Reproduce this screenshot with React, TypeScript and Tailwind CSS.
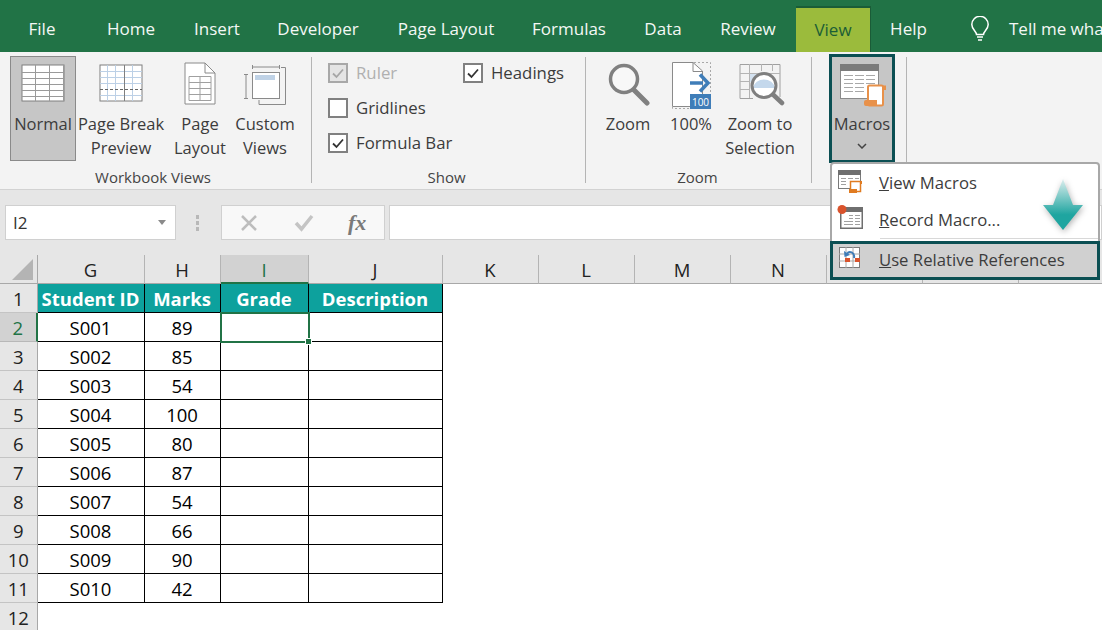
import type { ReactNode } from "react";

const font = "font-['Open_Sans','Noto_Sans',sans-serif]";

const tabs: [string, string][] = [
  ["File", "w-[84px]"],
  ["Home", "w-[94px]"],
  ["Insert", "w-[78px]"],
  ["Developer", "w-[124px]"],
  ["Page Layout", "w-[132px]"],
  ["Formulas", "w-[114px]"],
  ["Data", "w-[74px]"],
  ["Review", "w-[96px]"],
];

function Tabs() {
  return (
    <div className="flex h-[52px] bg-[#217346] text-[#f4f8f5] text-[17px] overflow-hidden whitespace-nowrap">
      {tabs.map(([t, w]) => (
        <div key={t} className={`${w} shrink-0 flex items-center justify-center pt-[6px]`}>{t}</div>
      ))}
      <div className="w-[75px] shrink-0 mt-[6px] h-[46px] flex items-center justify-center bg-[#9bbb3c] text-[#1b5e36] border-t-2 border-r border-[#1a5c37]">View</div>
      <div className="w-[75px] shrink-0 flex items-center justify-center pt-[6px]">Help</div>
      <div className="flex shrink-0 items-center pt-[6px] ml-[24px] gap-[19px]">
        <svg width="20" height="26" viewBox="0 0 20 26" fill="none" stroke="#fff" strokeWidth="1.5">
          <path d="M6.5 18.5c0-3-4.700-5-4.700-10a8.200 8.200 0 0 1 16.400 0c0 5-4.700 7-4.700 10z" />
          <path d="M7 21h6M8 24h4" />
        </svg>
        <span>Tell me what you want to do</span>
      </div>
    </div>
  );
}

function Sep() {
  return <div className="w-px h-[126px] mt-[5px] bg-[#b4b4b4] shrink-0" />;
}

function GroupLabel({ children }: { children: string }) {
  return <div className="h-[20px] leading-[20px] text-center text-[15px] text-[#444]">{children}</div>;
}

function RibbonBtn({ w, label, icon, active }: { w: string; label: string[]; icon: ReactNode; active?: boolean }) {
  return (
    <div className={`${w} h-[105px] flex flex-col items-center shrink-0 ${active ? "bg-[#c6c6c6] border border-[#8a8a8a]" : "border border-transparent"}`}>
      <div className="h-[55px] flex items-center justify-center">{icon}</div>
      <div className="text-[16.500px] leading-[24px] text-[#3c3c3c] text-center whitespace-nowrap">
        {label.map((l) => <div key={l}>{l}</div>)}
      </div>
    </div>
  );
}

function NormalIcon() {
  const h = [8, 14, 20, 26, 32];
  const v = [14, 28, 42];
  return (
    <svg width="44" height="38" viewBox="0 0 44 38" className="mt-[-3px]">
      <rect x="1" y="1" width="42" height="36" fill="#fff" stroke="#7f7f7f" />
      {h.map((y) => <path key={y} d={`M1 ${y + 0.5}H43`} stroke="#9a9a9a" />)}
      {v.map((x) => <path key={x} d={`M${x + 0.5} 1V37`} stroke="#9a9a9a" />)}
    </svg>
  );
}

function PageBreakIcon() {
  const h = [7, 13, 19, 31];
  const v = [8, 16, 33];
  return (
    <svg width="44" height="38" viewBox="0 0 44 38" className="mt-[-3px]">
      <rect x="1" y="1" width="42" height="36" fill="#fff" stroke="#7f7f7f" />
      {h.map((y) => <path key={y} d={`M1 ${y + 0.5}H43`} stroke="#bcd0e6" />)}
      {v.map((x) => <path key={x} d={`M${x + 0.5} 1V37`} stroke="#bcd0e6" />)}
      <path d="M25.500 1V37" stroke="#7f7f7f" />
      <path d="M1 25.500H43" stroke="#666" strokeDasharray="3 2" />
    </svg>
  );
}

function PageLayoutIcon() {
  return (
    <svg width="32" height="44" viewBox="0 0 32 44" className="mt-[-2px]">
      <path d="M1 1H21L31 11V42H1Z" fill="#fff" stroke="#8a8a8a" />
      <path d="M21 1V11H31" fill="none" stroke="#8a8a8a" />
      <path d="M5 14.500H27V38.500H5ZM5 20.500H27M5 26.500H27M5 32.500H27M16 14.500V38.500" fill="none" stroke="#a0a0a0" />
    </svg>
  );
}

function CustomViewsIcon() {
  return (
    <svg width="44" height="42" viewBox="0 0 44 42" className="mt-[-2px]">
      <path d="M9.500 2V6M36.500 2V6M9.500 4H36.500" stroke="#8a8a8a" fill="none" />
      <path d="M1 11.500H5M1 35.500H5M3 11.500V35.500" stroke="#8a8a8a" fill="none" />
      <path d="M38 4.500H42.500V41.500H16V37" stroke="#8a8a8a" strokeWidth="1" fill="none" />
      <rect x="9.500" y="9.500" width="27" height="26" fill="#fff" stroke="#8a8a8a" />
      <rect x="12" y="12" width="20" height="5" fill="#bfd2e6" />
    </svg>
  );
}

function Check({ on, disabled }: { on?: boolean; disabled?: boolean }) {
  return (
    <div className={`w-[20px] h-[20px] border-2 flex items-center justify-center ${disabled ? "border-[#a8a8a8] bg-[#e4e4e4]" : "border-[#808080] bg-white"}`}>
      {on && (
        <svg width="14" height="12" viewBox="0 0 14 12" fill="none" stroke={disabled ? "#a6a6a6" : "#333"} strokeWidth="1.800">
          <path d="M2 6.500L5.500 10L12 2.500" />
        </svg>
      )}
    </div>
  );
}

function CheckRow({ on, disabled, label }: { on?: boolean; disabled?: boolean; label: string }) {
  return (
    <div className="flex items-center gap-[8px] h-[35px] text-[16.800px] whitespace-nowrap">
      <Check on={on} disabled={disabled} />
      <span className={disabled ? "text-[#b0b0b0]" : "text-[#3c3c3c]"}>{label}</span>
    </div>
  );
}

function ZoomIcon() {
  return (
    <svg width="44" height="44" viewBox="0 0 44 44" fill="none" stroke="#808080">
      <circle cx="18" cy="16" r="13.500" fill="#f8f8f8" strokeWidth="3.500" />
      <path d="M28 27L41 40" strokeWidth="5" strokeLinecap="round" />
    </svg>
  );
}

function HundredIcon() {
  return (
    <svg width="42" height="48" viewBox="0 0 42 48">
      <path d="M24 1.500H40.500V47.500H2.500V40" fill="none" stroke="#a8a8a8" strokeDasharray="2 2" />
      <path d="M2.500 45.500V1.500H23L32.500 10V45.500Z" fill="#fff" stroke="#8a8a8a" />
      <path d="M23 1.500V10.500H32.500" fill="none" stroke="#8a8a8a" />
      <path d="M20 22H33" stroke="#3f7db8" strokeWidth="3.500" />
      <path d="M30 13.500L38 22L30 30.500" fill="none" stroke="#3f7db8" strokeWidth="3.500" />
      <rect x="20" y="33" width="21" height="15" fill="#3f7db8" />
      <text x="30.500" y="44.500" textAnchor="middle" fontSize="10" fill="#fff" fontFamily="Open Sans">100</text>
    </svg>
  );
}

function ZoomSelIcon() {
  return (
    <svg width="46" height="46" viewBox="0 0 46 46" fill="none" className="ml-[3px] mt-[3px]">
      <path d="M1 1.500H41V34M1 1.500V35.500H14" stroke="#a0a0a0" />
      <path d="M1 10.500H41M1 18.500H10M1 26.500H10M10.500 1V35M22.500 1V8M33.500 1V8" stroke="#b4b4b4" />
      <rect x="11" y="11" width="12" height="8" fill="#d4e2f0" />
      <circle cx="25" cy="22.500" r="12" fill="#fff" />
      <path d="M13.500 25A12 12 0 0 1 36.500 25Z" fill="#c4d8ec" />
      <circle cx="25" cy="22.500" r="12" stroke="#7f7f7f" strokeWidth="3" />
      <path d="M34 31.500L43 40" stroke="#7f7f7f" strokeWidth="4.500" strokeLinecap="round" />
    </svg>
  );
}

function MacroIcon() {
  return (
    <svg width="48" height="44" viewBox="0 0 48 44">
      <rect x="0.500" y="0.500" width="38" height="34" fill="#fff" stroke="#8a8a8a" />
      <rect x="0" y="0" width="39" height="7" fill="#7b7b7b" />
      <path d="M4 11.500H13M15 11.500H24M26 11.500H35M4 15.500H13M15 15.500H24M26 15.500H35M4 19.500H13M15 19.500H24M26 19.500H35M4 23.500H13M15 23.500H24M4 27.500H13M15 27.500H24" stroke="#a8a8a8" strokeWidth="1.200" />
      <path d="M42 21.500H46V26H42Z" fill="#e8914a" />
      <rect x="28" y="21.500" width="15" height="20" rx="1.500" fill="#fff" stroke="#e8914a" strokeWidth="2" />
      <path d="M24 38Q24 36 26 36H37V42H26Q24 42 24 40Z" fill="#e8914a" />
    </svg>
  );
}

function Ribbon() {
  return (
    <div className="flex h-[138px] bg-[#f3f3f3] border-b border-[#d2d2d2] text-[#3c3c3c]">
      <div className="w-[311px] shrink-0 pl-[10px] pt-[4px]">
        <div className="flex h-[111px]">
          <RibbonBtn w="w-[66px]" active label={["Normal"]} icon={<NormalIcon />} />
          <RibbonBtn w="w-[90px]" label={["Page Break", "Preview"]} icon={<PageBreakIcon />} />
          <RibbonBtn w="w-[68px]" label={["Page", "Layout"]} icon={<PageLayoutIcon />} />
          <RibbonBtn w="w-[62px]" label={["Custom", "Views"]} icon={<CustomViewsIcon />} />
        </div>
        <div className="pr-[15px]"><GroupLabel>Workbook Views</GroupLabel></div>
      </div>
      <Sep />
      <div className="w-[273px] shrink-0 pt-[3px]">
        <div className="flex h-[112px] pl-[16px]">
          <div className="w-[135px]">
            <CheckRow on disabled label="Ruler" />
            <CheckRow label="Gridlines" />
            <CheckRow on label="Formula Bar" />
          </div>
          <CheckRow on label="Headings" />
        </div>
        <div className="pr-[4px]"><GroupLabel>Show</GroupLabel></div>
      </div>
      <Sep />
      <div className="w-[225px] shrink-0 pt-[4px]">
        <div className="flex h-[111px] pl-[6px]">
          <RibbonBtn w="w-[72px]" label={["Zoom"]} icon={<ZoomIcon />} />
          <RibbonBtn w="w-[54px]" label={["100%"]} icon={<HundredIcon />} />
          <RibbonBtn w="w-[84px]" label={["Zoom to", "Selection"]} icon={<ZoomSelIcon />} />
        </div>
        <div className="pr-[2px]"><GroupLabel>Zoom</GroupLabel></div>
      </div>
      <Sep />
      <div className="w-[94px] shrink-0 pl-[17px] pt-[2px]">
        <div className="w-[66px] h-[109px] bg-[#c6c6c6] border-[3px] border-[#0b4f53] flex flex-col items-center">
          <div className="h-[54px] flex items-center justify-center pl-[3px] pt-[3px]"><MacroIcon /></div>
          <div className="text-[16.500px] leading-[24px] text-[#3c3c3c] mt-[1px]">Macros</div>
          <svg width="10" height="6" viewBox="0 0 10 6" fill="none" stroke="#444" strokeWidth="1.500" className="mt-[7px]"><path d="M1 1L5 5L9 1" /></svg>
        </div>
      </div>
      <Sep />
    </div>
  );
}

function FormulaBar() {
  return (
    <div className="flex h-[65px] bg-[#e6e6e6] pt-[15px] pl-[5px]">
      <div className="w-[171px] h-[35px] bg-white border border-[#d0d0d0] flex items-center justify-between pl-[7px] pr-[9px] text-[17px] text-[#333]">
        <span>I2</span>
        <svg width="8" height="5" viewBox="0 0 8 5"><path d="M0 0H8L4 5Z" fill="#8a8a8a" /></svg>
      </div>
      <div className="w-[45px] flex flex-col items-center justify-center gap-[2px] h-[35px] pr-[2px]">
        <span className="w-[3px] h-[4px] bg-[#b8b8b8]" />
        <span className="w-[3px] h-[4px] bg-[#b8b8b8]" />
        <span className="w-[3px] h-[4px] bg-[#b8b8b8]" />
      </div>
      <div className="w-[164px] h-[35px] bg-[#f8f8f8] border border-[#d0d0d0] flex items-center pl-[18px] gap-[36px]">
        <svg width="18" height="18" viewBox="0 0 18 18" stroke="#bdbdbd" strokeWidth="2.500" fill="none"><path d="M2 2L16 16M16 2L2 16" /></svg>
        <svg width="20" height="18" viewBox="0 0 20 18" stroke="#c4c4c4" strokeWidth="3.500" fill="none"><path d="M2 9L7.500 15L18 2" /></svg>
        <span className="font-['Liberation_Serif',serif] italic font-bold text-[22px] text-[#7a7a7a] ml-[-2px]">fx</span>
      </div>
      <div className="w-[4px]" />
      <div className="flex-1 h-[35px] bg-white border border-[#d0d0d0]" />
    </div>
  );
}

const cols = ["G", "H", "I", "J", "K", "L", "M", "N", "O", "P", "Q", "R"];
const rows: [string, string][] = [
  ["S001", "89"], ["S002", "85"], ["S003", "54"], ["S004", "100"], ["S005", "80"],
  ["S006", "87"], ["S007", "54"], ["S008", "66"], ["S009", "90"], ["S010", "42"],
];
const cell = "h-[29px] pt-[2px] border-r border-b border-black bg-white text-[18.500px] text-black flex items-center justify-center";

function RowHead({ n, sel }: { n: number; sel?: boolean }) {
  return (
    <div className={`h-[29px] pt-[2px] flex items-center justify-center text-[18.500px] border-b ${sel ? "bg-[#d2d2d2] text-[#217346] border-r-2 border-r-[#217346] border-b-[#b8b8b8]" : "bg-[#e6e6e6] text-[#222] border-r border-r-[#a8a8a8] border-b-[#c4c4c4]"}`}>{n}</div>
  );
}

function Sheet() {
  return (
    <div className="relative grid grid-cols-[37.500px_107px_76px_88px_134px_96px_96px_96px_96px_96px_96px_96px_96px] bg-white overflow-hidden">
      <div className="h-[29px] bg-[#e6e6e6] border-r border-b border-[#a8a8a8] relative">
        <svg width="22" height="22" viewBox="0 0 22 22" className="absolute right-[3px] bottom-[2px]"><path d="M21 0V21H0Z" fill="#b4b4b4" /></svg>
      </div>
      {cols.map((c) => (
        <div key={c} className={`h-[29px] pt-[2px] flex items-center justify-center text-[18.500px] border-r border-r-[#b4b4b4] ${c === "I" ? "bg-[#d2d2d2] text-[#217346] border-b-2 border-b-[#217346]" : "bg-[#e6e6e6] text-[#222] border-b border-b-[#a8a8a8]"}`}>{c}</div>
      ))}

      <RowHead n={1} />
      {["Student ID", "Marks", "Grade", "Description"].map((h) => (
        <div key={h} className="h-[29px] pt-[2px] bg-[#0da19d] text-white font-bold text-[18.500px] flex items-center justify-center border-r border-b border-black whitespace-nowrap">{h}</div>
      ))}
      <div className="col-span-8 bg-white" />

      {rows.map(([id, m], i) => (
        <div key={id} className="contents">
          <RowHead n={i + 2} sel={i === 0} />
          <div className={cell}>{id}</div>
          <div className={cell}>{m}</div>
          <div className={`${cell} ${i === 0 ? "relative overflow-visible z-[1]" : ""}`}>
            {i === 0 && (
              <>
                <div className="absolute left-[-1px] top-[-1px] w-[90px] h-[31px] border-2 border-[#217346]" />
                <div className="absolute right-[-4px] bottom-[-4px] w-[7px] h-[7px] bg-[#217346] border border-white" />
              </>
            )}
          </div>
          <div className={cell} />
          <div className="col-span-8 bg-white" />
        </div>
      ))}
      <RowHead n={12} />
    </div>
  );
}

function Menu() {
  const rowCls = "flex items-center text-[16.700px] text-[#3c3c3c] whitespace-nowrap";
  return (
    <div className="absolute left-[830px] top-[162px] w-[270px] h-[118px] bg-white border-2 border-[#a8a8a8] rounded-[4px] z-10">
      <div className={`${rowCls} h-[37px] pl-[47px] relative`}>
        <svg width="26" height="24" viewBox="0 0 26 24" className="absolute left-[6px] top-[6px]">
          <rect x="0.500" y="0.500" width="22" height="18" fill="#fff" stroke="#7a7a7a" />
          <rect x="0" y="0" width="23" height="5" fill="#6f6f6f" />
          <path d="M3 8.500H8M10 8.500H15M17 8.500H21M3 11.500H8M3 14.500H8" stroke="#a0a0a0" />
          <rect x="12.500" y="11.500" width="10" height="10" fill="#fff" stroke="#e07b20" strokeWidth="1.500" />
          <path d="M11 19H19V23H11Z" fill="#e07b20" />
          <path d="M22 11H24V14H22Z" fill="#e07b20" />
        </svg>
        <span><span className="underline">V</span>iew Macros</span>
      </div>
      <div className={`${rowCls} h-[37px] pl-[47px] relative`}>
        <svg width="26" height="26" viewBox="0 0 26 26" className="absolute left-[5px] top-[3px]">
          <rect x="3.750" y="3.750" width="21.500" height="20.500" fill="#fff" stroke="#6f6f6f" strokeWidth="1.500" />
          <rect x="4" y="3" width="22" height="5" fill="#6f6f6f" />
          <path d="M12 11.500H16M18 11.500H23M12 14.500H16M18 14.500H23M7 17.500H16M18 17.500H23M7 20.500H16M18 20.500H23" stroke="#a0a0a0" />
          <circle cx="5" cy="5.500" r="4.500" fill="#d9532c" />
        </svg>
        <span><span className="underline">R</span>ecord Macro...</span>
      </div>
      <div className="h-px ml-[48px] bg-[#d8d8d8]" />
      <div className={`${rowCls} absolute left-[-2px] right-[-2px] bottom-[-2px] h-[39px] pb-[2px] pl-[46px] bg-[#d0d0d0] border-[3px] border-[#0b4f53]`}>
        <svg width="22" height="22" viewBox="0 0 22 22" className="absolute left-[6px] top-[3px]">
          <rect x="0.500" y="0.500" width="20" height="20" fill="#fff" stroke="#7a7a7a" />
          <path d="M7 0V21M14 0V21M0 7H21M0 14H21" stroke="#a8a8a8" />
          <rect x="6" y="11" width="5" height="4" fill="#d9532c" />
          <rect x="16" y="11" width="5" height="4" fill="#d9532c" />
          <path d="M15 11C16 5 10 3.500 8 7" fill="none" stroke="#3f7db8" strokeWidth="2" />
          <path d="M5 4L11 8L5.500 10Z" fill="#3f7db8" />
        </svg>
        <span><span className="underline">U</span>se Relative References</span>
      </div>
      <svg width="42" height="52" viewBox="0 0 42 52" className="absolute left-[210px] top-[15px] drop-shadow-[1px_2px_3px_rgba(0,0,0,0.3)]">
        <defs>
          <linearGradient id="arrowFill" x1="0" y1="0" x2="0" y2="1">
            <stop offset="0" stopColor="#dceeee" />
            <stop offset="0.7" stopColor="#1fa5a0" />
            <stop offset="1" stopColor="#1fa5a0" />
          </linearGradient>
        </defs>
        <path d="M21 0L31 26H41L21 51L1 26H11Z" fill="url(#arrowFill)" />
      </svg>
    </div>
  );
}

export default function App() {
  return (
    <div className={`relative w-[1102px] h-[630px] overflow-hidden bg-white ${font}`}>
      <Tabs />
      <Ribbon />
      <FormulaBar />
      <Sheet />
      <Menu />
    </div>
  );
}
